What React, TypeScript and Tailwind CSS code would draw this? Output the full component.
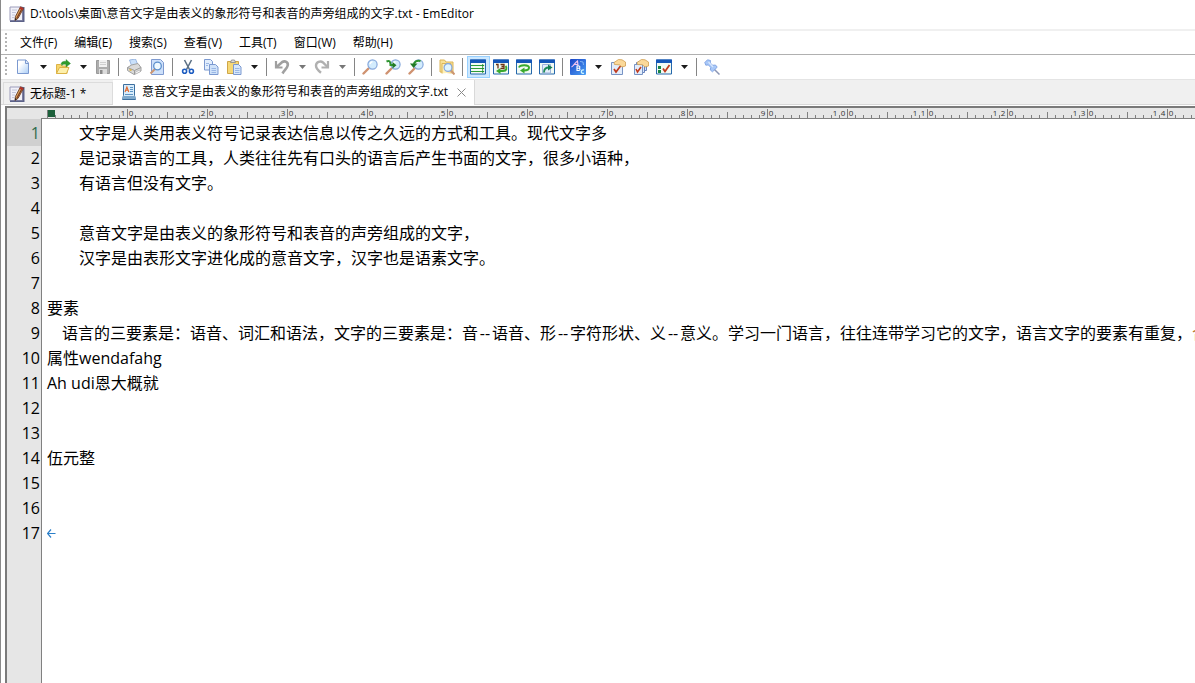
import React, { useEffect, useState } from "react";

const menus = ["文件(F)", "编辑(E)", "搜索(S)", "查看(V)", "工具(T)", "窗口(W)", "帮助(H)"];

const lines = [
  "\u3000\u3000文字是人类用表义符号记录表达信息以传之久远的方式和工具。现代文字多",
  "\u3000\u3000是记录语言的工具，人类往往先有口头的语言后产生书面的文字，很多小语种，",
  "\u3000\u3000有语言但没有文字。",
  "",
  "\u3000\u3000意音文字是由表义的象形符号和表音的声旁组成的文字，",
  "\u3000\u3000汉字是由表形文字进化成的意音文字，汉字也是语素文字。",
  "",
  "要素",
  "    语言的三要素是：语音、词汇和语法，文字的三要素是：音--语音、形--字符形状、义--意义。学习一门语言，往往连带学习它的文字，语言文字的要素有重复，合",
  "属性wendafahg",
  "Ah udi恩大概就",
  "",
  "",
  "伍元整",
  "",
  "",
  "",
];

const Svg = ({ children }: { children: React.ReactNode }) => (
  <svg className="h-4 w-4 shrink-0" viewBox="0 0 16 16" fill="none" aria-hidden="true">
    {children}
  </svg>
);

const NotepadIcon = () => (
  <Svg>
    <path d="M1 1h12.500v13.500H1z" fill="#f1f1f8" stroke="#9c9cba" />
    <path d="M14.500 1v14.500H1" stroke="#5c6288" strokeWidth="2" />
    <path d="M3 4h5M3 6.500h4M3 9h3M3 11.500h2" stroke="#c3c6da" />
    <path d="M11.500.8l3 1.600-5.500 10-3 2 .3-3.600z" fill="#d9a25a" stroke="#5a2d1c" strokeWidth=".8" />
    <path d="M13.400 2L7.800 12.200" stroke="#7d3a1d" strokeWidth="1.200" />
    <path d="M11.500.8l3 1.600-1 1.800-3-1.500z" fill="#b5312a" />
    <path d="M6.200 12l1.600 1L5.900 14.500z" fill="#222" />
  </Svg>
);

const TextDocIcon = () => (
  <Svg>
    <path d="M2.500.5h11v11l1 4h-13l1-4z" fill="#d8ecfb" stroke="#3c6f9f" />
    <path d="M2 12h12l.8 3H1.200z" fill="#7fa9cc" />
    <path d="M4 8l1.900-5L7.800 8M4.700 6.200h2.400" stroke="#e0662a" strokeWidth="1.100" />
    <path d="M9 3.500h3M9 5.500h3M9 7.500h3M4 10.500h8" stroke="#5d94c4" />
  </Svg>
);

const Caret = ({ muted = false }: { muted?: boolean }) => (
  <svg className="h-1 w-[7px]" viewBox="0 0 7 4" aria-hidden="true">
    <path d="M0 0h7L3.500 4z" fill={muted ? "#777" : "#1b1b1b"} />
  </svg>
);

const Lens = () => (
  <>
    <path d="M6.500 9.500L1.500 14.500" stroke="#cf9270" strokeWidth="2.400" strokeLinecap="round" />
    <circle cx="10.500" cy="5.500" r="4.600" fill="#d3ecfd" stroke="#86a8dc" strokeWidth="1.200" />
    <path d="M8 5a3 3 0 012.500-2.200" stroke="#fff" strokeWidth="1.400" />
  </>
);

const WindowFrame = () => (
  <>
    <path d="M.5 1h15v14H.5z" fill="#f2faf4" stroke="#2668ac" />
    <path d="M0 .5h16V4H0z" fill="#1556b8" />
  </>
);

const PageMark = () => (
  <>
    <path d="M1.500 3.500h11v12h-11z" fill="#e3edfb" stroke="#7793c4" />
    <path d="M4 10l2 3 4.500-6" stroke="#c03a1d" strokeWidth="1.700" />
  </>
);

const Hand = () => (
  <path d="M4 3.500L8.500.5l3.500.3 3.500 2.200v4L12 8 9.500 5.800 4.500 5.500z" fill="#fbd99a" stroke="#d0a052" strokeWidth=".8" />
);

const icons: Record<string, React.ReactNode> = {
  new: (
    <Svg>
      <defs>
        <linearGradient id="page" x1="0" y1="0" x2="1" y2="1">
          <stop offset=".3" stopColor="#fff" />
          <stop offset="1" stopColor="#a9cdf6" />
        </linearGradient>
      </defs>
      <path d="M2.500 1h8.500l2.500 3v10.500h-11z" fill="url(#page)" stroke="#7b99d0" />
      <path d="M10.500 1v3.500h3" stroke="#7b99d0" />
    </Svg>
  ),
  open: (
    <Svg>
      <path d="M1.500 14.500v-9h4l1.500 1.500h5v7.500z" fill="#f7d56b" stroke="#dcb347" />
      <path d="M1.500 14.500l3-6h9.500l-2.500 6z" fill="#fdf0ac" stroke="#dcb347" />
      <path d="M6 4.800C7 2.500 9 2 11 2.500V.5l4.500 4L11 8V5.500C9 5 7.500 5.500 7 6.500z" fill="#2f9b2c" stroke="#2c8a2c" strokeWidth=".4" />
    </Svg>
  ),
  save: (
    <Svg>
      <path d="M1.500 1.500h13v13h-13z" fill="#adadad" stroke="#9a9a9a" />
      <path d="M4 1h8v7H4z" fill="#f1f1f1" />
      <path d="M4 10h8v5H4z" fill="#dcdcdc" />
      <path d="M5 11h2.500v4H5z" fill="#8a8a8a" />
      <path d="M5 3.500h6M5 5.500h6" stroke="#cfcfcf" />
    </Svg>
  ),
  print: (
    <Svg>
      <path d="M3.500 1l6-1 2.500 6-6 2z" fill="#c9e0fa" stroke="#8aabda" strokeWidth=".8" />
      <path d="M1.500 8.500l4-2.500 6.500-1.500 3 4v3.500l-7 3.500-6.500-4z" fill="#dadada" stroke="#a0a0a0" />
      <path d="M1.500 8.500l7 3 6.500-3M8.500 11.500v4" stroke="#9a9a9a" />
      <path d="M9 13.500l4.500-2.500 1 1.500-5 2.700z" fill="#f8f8f8" stroke="#999" strokeWidth=".5" />
      <path d="M3.500 10.500l2 1" stroke="#e1b53c" strokeWidth="1.400" />
    </Svg>
  ),
  preview: (
    <Svg>
      <path d="M2.500.5h9l3 3v12h-12z" fill="#cde0fa" stroke="#7e9ad0" />
      <path d="M6 10l-4.500 4.500" stroke="#cc9672" strokeWidth="2" />
      <circle cx="8.500" cy="7" r="3.800" fill="#eef9ff" stroke="#5b8fcd" strokeWidth="1.300" />
    </Svg>
  ),
  cut: (
    <Svg>
      <path d="M4.500 1l5 9.500M11.500 1l-5 9.500" stroke="#5d7186" strokeWidth="1.600" />
      <circle cx="4.600" cy="12.300" r="2" stroke="#1d5cc0" strokeWidth="1.600" />
      <circle cx="11.400" cy="12.300" r="2" stroke="#1d5cc0" strokeWidth="1.600" />
    </Svg>
  ),
  copy: (
    <Svg>
      <path d="M1.500.5h6l2 2v8.500h-8z" fill="#e2eefd" stroke="#7b99d0" />
      <path d="M6.500 5.500h6l2.500 2.500v7.500H6.500z" fill="#cfe2f9" stroke="#7b99d0" />
      <path d="M3 4.500h3M3 6.500h2M8.500 9.500h4.500M8.500 11.500h4.500M8.500 13.500h4.500" stroke="#9ab7e5" />
    </Svg>
  ),
  paste: (
    <Svg>
      <path d="M1.500 2.500h11v12h-11z" fill="#f6d876" stroke="#cfa648" />
      <path d="M4.500 3.500l1-2.500h3l1 2.500z" fill="#ddd" stroke="#888" strokeWidth=".8" />
      <path d="M7.500 5.500h5l2.500 2.500v7.500H7.500z" fill="#d7e8fc" stroke="#7b99d0" />
      <path d="M9 9.500h4.500M9 11.500h4.500M9 13.500h4.500" stroke="#9ab7e5" />
    </Svg>
  ),
  undo: (
    <Svg>
      <path d="M2 2v6.500h6.500" stroke="#a0a0a0" strokeWidth="2.200" />
      <path d="M2.500 8L8 3.200c3-2 6.500-.2 5.700 3.300C13 9.500 10.500 11 8.500 14.500" stroke="#a0a0a0" strokeWidth="2.600" />
    </Svg>
  ),
  redo: (
    <Svg>
      <path d="M14 2v6.500H7.500" stroke="#b0b0b0" strokeWidth="2.200" />
      <path d="M13.500 8L9 3.500C6.500 1.500 2 3 2 6.800c0 2.700 1.800 4.500 5 7" stroke="#b0b0b0" strokeWidth="2.400" />
    </Svg>
  ),
  find: (
    <Svg>
      <Lens />
    </Svg>
  ),
  findNext: (
    <Svg>
      <Lens />
      <path d="M1.500 2.500c3-1.500 4 0 4 3.500h3" stroke="#2c932f" strokeWidth="2" />
      <path d="M7.500 3l4 3.200-4 3.300z" fill="#217a27" />
    </Svg>
  ),
  findPrev: (
    <Svg>
      <Lens />
      <path d="M12.500 2C9 1 6 2.500 5.800 6" stroke="#2c932f" strokeWidth="2" />
      <path d="M2 4.500h7.500L5.500 9z" fill="#217a27" />
    </Svg>
  ),
  findInFiles: (
    <Svg>
      <path d="M1 13V1h4.500L7 3h7v11z" fill="#f8e096" stroke="#dcb557" />
      <path d="M3 14.500V4.500h9v9" fill="#fff0b8" stroke="#dcb557" />
      <path d="M11.500 11l4 4.500" stroke="#cc9672" strokeWidth="2" />
      <circle cx="9" cy="8.500" r="3.900" fill="#dff4ff" stroke="#86a8dc" strokeWidth="1.200" />
    </Svg>
  ),
  wrapNone: (
    <Svg>
      <WindowFrame />
      <path d="M1 6.500h13M1 9.500h13M1 12.500h13" stroke="#2d9c38" />
      <path d="M12 5l2.500 1.500L12 8zM12 8l2.500 1.500L12 11zM12 11l2.500 1.500L12 14z" fill="#218c2f" />
    </Svg>
  ),
  wrapChars: (
    <Svg>
      <WindowFrame />
      <path d="M12.500 7c2 2 1 5-2.500 5H7" stroke="#39a92d" strokeWidth="2" />
      <path d="M7.500 9v6L3 12z" fill="#39a92d" />
      <path d="M3 5.500h2v4M7.500 5.500h3.500v2H8.500M11 7.500v2H7.500" stroke="#6c3513" strokeWidth="1.300" />
    </Svg>
  ),
  wrapWindow: (
    <Svg>
      <WindowFrame />
      <path d="M3 8.500c1-3 10-3 10 .3 0 2-2 2.700-5 2.700" stroke="#39a92d" strokeWidth="2" />
      <path d="M8.500 8.500v6L4 11.500z" fill="#39a92d" />
    </Svg>
  ),
  wrapPage: (
    <Svg>
      <WindowFrame />
      <path d="M3.500 5.500h8v8.500h-8z" fill="#e4edfb" stroke="#9db3db" />
      <path d="M5 13.500c0-3 1.500-5 5-5" stroke="#1f8a58" strokeWidth="1.800" />
      <path d="M9 5.500l4.500 3L9 11.500z" fill="#157f4f" />
    </Svg>
  ),
  spell: (
    <Svg>
      <defs>
        <linearGradient id="spell" x1="0" y1="0" x2="1" y2="1">
          <stop offset="0" stopColor="#1943c6" />
          <stop offset="1" stopColor="#4ba0f5" />
        </linearGradient>
      </defs>
      <rect width="16" height="16" rx="1" fill="url(#spell)" />
      <path d="M1.500 8C4 7 5 3.500 7.500 2l.5 5M4.500 5.500h3.500" stroke="#f3c4f0" strokeWidth="1.200" />
      <path d="M7 7v4.500h2c1.300 0 1.300-2.300 0-2.300H7.500 9c1.200 0 1.200-2.200 0-2.200z" stroke="#fff" strokeWidth="1.100" />
      <path d="M14 11c-3-1-4 4 0 3.300" stroke="#c9f2ff" strokeWidth="1.400" />
      <path d="M10 2.500l3 .5.500 3" stroke="#7fb4f5" />
    </Svg>
  ),
  props: (
    <Svg>
      <PageMark />
      <Hand />
    </Svg>
  ),
  propsAll: (
    <Svg>
      <path d="M5.500 2.500h8v9h-8z" fill="#d8e5fa" stroke="#6783bd" />
      <path d="M3.500 3.500h8v10h-8z" fill="#d8e5fa" stroke="#6783bd" />
      <path d="M1.500 5.500h8v10h-8z" fill="#e3edfb" stroke="#7793c4" />
      <path d="M3 10l1.500 3 3.500-5" stroke="#c03a1d" strokeWidth="1.600" />
      <Hand />
    </Svg>
  ),
  customize: (
    <Svg>
      <WindowFrame />
      <path d="M2 7h3v3H2zM2 11h3v3H2z" fill="#188445" />
      <path d="M7 9.500l2 3 4.500-6.500" stroke="#c03a1d" strokeWidth="1.800" />
    </Svg>
  ),
  pin: (
    <Svg>
      <path d="M10 10l5.500 5.500" stroke="#8b96b5" strokeWidth="1.500" />
      <path d="M.8 3.500L3.500.8 6.500 1.500 6.200 4 8.800 6.300l2.700-.3 1.700 2.200-4.700 4.600L6.300 11l.4-2.700L4.300 5.900 1.800 6.200z" fill="#a8c8f8" stroke="#7ea2e2" strokeWidth=".9" />
      <path d="M4.500 3l4.500 5" stroke="#d9e8fd" strokeWidth="1.200" />
    </Svg>
  ),
};

type Tool = { icon?: string; label?: string; drop?: boolean; muted?: boolean; sep?: boolean };

const tools: Tool[] = [
  { icon: "new", label: "新建", drop: true },
  { icon: "open", label: "打开", drop: true },
  { icon: "save", label: "保存" },
  { sep: true },
  { icon: "print", label: "打印" },
  { icon: "preview", label: "打印预览" },
  { sep: true },
  { icon: "cut", label: "剪切" },
  { icon: "copy", label: "复制" },
  { icon: "paste", label: "粘贴", drop: true },
  { sep: true },
  { icon: "undo", label: "撤销", drop: true, muted: true },
  { icon: "redo", label: "重做", drop: true, muted: true },
  { sep: true },
  { icon: "find", label: "查找" },
  { icon: "findNext", label: "查找下一个" },
  { icon: "findPrev", label: "查找上一个" },
  { sep: true },
  { icon: "findInFiles", label: "在文件中查找" },
  { sep: true },
  { icon: "wrapNone", label: "不换行" },
  { icon: "wrapChars", label: "按字符数换行" },
  { icon: "wrapWindow", label: "按窗口换行" },
  { icon: "wrapPage", label: "按页面换行" },
  { sep: true },
  { icon: "spell", label: "拼写检查", drop: true },
  { icon: "props", label: "当前配置属性" },
  { icon: "propsAll", label: "所有配置属性" },
  { icon: "customize", label: "自定义", drop: true },
  { sep: true },
  { icon: "pin", label: "置顶" },
];

const Grip = () => (
  <svg className="h-5 w-[2px] shrink-0" viewBox="0 0 2 20" aria-hidden="true">
    <path d="M1 0v20" stroke="#b4b4b4" strokeWidth="2" strokeDasharray="2 2" />
  </svg>
);

const Toolbar = () => {
  const [wrap, setWrap] = useState("wrapNone");

  return (
    <div className="flex h-[22px] items-center pl-1">
      <Grip />
      <div className="flex pl-[5px]">
        {tools.map((tool, idx) =>
          tool.sep ? (
            <div key={idx} className="flex w-2 items-center pl-[3px]">
              <div className="h-[18px] w-px bg-[#858585]" />
            </div>
          ) : (
            <div key={idx} className="flex">
              <button
                aria-label={tool.label}
                onClick={() => tool.icon?.startsWith("wrap") && setWrap(tool.icon)}
                className={`flex h-[22px] w-[23px] items-center justify-center border pr-px ${
                  wrap === tool.icon ? "border-[#99d1ff] bg-[#cce8ff]" : "border-transparent"
                }`}
              >
                {icons[tool.icon!]}
              </button>
              {tool.drop && (
                <button aria-label={`${tool.label}选项`} className="flex w-[17px] items-center justify-center">
                  <Caret muted={tool.muted} />
                </button>
              )}
            </div>
          )
        )}
      </div>
    </div>
  );
};

const Tabs = () => (
  <div className="flex h-[25px] items-end border-b border-[#d9d9d9] bg-[#f0f0f0] pl-[2px]">
    <button className="flex h-[22px] w-[110px] items-center gap-[5px] border border-b-0 border-[#dcdcdc] pl-[5px]">
      <NotepadIcon />
      <span>无标题-1 *</span>
    </button>
    <div className="-mb-px flex h-[25px] w-[362px] items-center border-r border-[#d9d9d9] bg-white pl-2">
      <button className="flex items-center gap-[5px] pb-[2px]">
        <TextDocIcon />
        <span className="whitespace-nowrap">意音文字是由表义的象形符号和表音的声旁组成的文字.txt</span>
      </button>
      <button aria-label="关闭" className="ml-auto mr-2">
        <svg className="h-[9px] w-[9px]" viewBox="0 0 9 9" aria-hidden="true">
          <path d="M.5.5l8 8M8.500.5l-8 8" stroke="#8a8a8a" />
        </svg>
      </button>
    </div>
  </div>
);

// Every cell is ten columns wide and is centred on its own label
const Ruler = () => {
  const [width, setWidth] = useState(window.innerWidth);

  useEffect(() => {
    const onResize = () => setWidth(window.innerWidth);
    window.addEventListener("resize", onResize);
    return () => window.removeEventListener("resize", onResize);
  }, []);

  const cells = Math.max(0, Math.ceil((width - 87) / 80));

  return (
    <div className="ml-[34px] flex h-[11px] shrink-0 overflow-hidden border-b border-[#808080] bg-[#e6e6e6]">
      <div className="flex w-[46px] shrink-0 justify-end">
        <svg className="h-[10px] w-10" viewBox="0 0 40 10" aria-hidden="true">
          <path d="M.5 2v8" stroke="#808080" />
          <path d="M1 2h7v7H1z" fill="#1c5f3a" />
          <path d="M8.500 7v3M16.500 7v3M24.500 7v3M32.500 7v3" stroke="#808080" />
        </svg>
      </div>
      {Array.from({ length: cells }, (_, i) => i + 1).map((n) => (
        <div key={n} className="relative flex h-[10px] w-20 shrink-0 text-[8px] leading-[10px] text-[#333]">
          <svg className="absolute inset-0 h-[10px] w-20" viewBox="0 0 80 10" aria-hidden="true">
            <path d="M8.500 7v3M16.500 7v3M24.500 7v3M32.500 7v3M48.500 7v3M56.500 7v3M64.500 7v3M72.500 7v3" stroke="#808080" />
            <path d="M.5 4v6M40.500 1v9" stroke="#808080" />
          </svg>
          <div className="flex w-10 justify-end">
            {String(n).split("").map((d, i) => (
              <span key={i} className="w-2 text-center">{d}</span>
            ))}
          </div>
          <span className="w-2 text-center">0</span>
        </div>
      ))}
    </div>
  );
};

const Line = ({ text }: { text: string }) => (
  <div className="h-[25px] whitespace-pre">
    {text.split(/(--|^ {4}|合$)/).map((part, i) => {
      if (part === "--") return <span key={i} className="inline-block w-[14px] text-center">--</span>;
      if (part === "    ") return <span key={i} className="inline-block w-[15px]" />;
      if (part === "合") return <span key={i} className="text-[#b8772e]">合</span>;
      return part;
    })}
  </div>
);

const Editor = () => (
  <div className="ml-1 flex flex-1 flex-col overflow-hidden border-l-2 border-t-2 border-[#7a7a7a] bg-[#e6e6e6]">
    <Ruler />
    <div className="flex flex-1 text-base leading-[25px]">
      <div className="w-[35px] shrink-0 border-r border-[#808080] text-right">
        {lines.map((_, idx) => (
          <div key={idx} className={idx === 0 ? "bg-[#d0d0d0] pr-px pt-[2px] text-[#2f6b4a]" : "pr-px"}>
            {idx + 1}
          </div>
        ))}
      </div>
      <div className="flex-1 overflow-hidden bg-white pl-[5px] pt-[2px]">
        <div
          role="textbox"
          aria-multiline="true"
          aria-label="正文"
          contentEditable
          suppressContentEditableWarning
          spellCheck={false}
          className="outline-none"
        >
          {lines.slice(0, -1).map((text, idx) => (
            <Line key={idx} text={text} />
          ))}
        </div>
        <div className="flex h-[25px] items-center">
          <svg className="h-[9px] w-[9px]" viewBox="0 0 9 9" fill="none" aria-hidden="true">
            <path d="M8.500 4.500H.5M4 .5l-3.500 4 3.500 4" stroke="#2a7fc9" strokeWidth="1.200" />
          </svg>
        </div>
      </div>
    </div>
  </div>
);

export default function App() {
  return (
    <div className="flex h-screen flex-col overflow-hidden border-l border-[#8a8a8a] bg-white font-['Open_Sans','Noto_Sans_CJK_SC',sans-serif] text-xs text-black">
      <header className="flex h-[29px] shrink-0 items-center gap-[5px] pb-[2px] pl-2">
        <NotepadIcon />
        <h1 className="whitespace-nowrap">
          D:\tools\桌面\意音文字是由表义的象形符号和表音的声旁组成的文字.txt - EmEditor
        </h1>
      </header>
      <nav className="flex h-[26px] shrink-0 items-center border-b border-t-2 border-b-[#b0b0b0] border-t-[#f0f0f0] pl-1">
        <Grip />
        <div className="flex gap-px pl-[5px]">
          {menus.map((menu) => (
            <button key={menu} className="whitespace-nowrap px-2">
              {menu}
            </button>
          ))}
        </div>
      </nav>
      <div className="flex shrink-0 flex-col gap-px border-b border-white pt-px">
        <Toolbar />
        <div className="border-t border-[#e4e4e4]">
          <Tabs />
        </div>
      </div>
      <Editor />
    </div>
  );
}
